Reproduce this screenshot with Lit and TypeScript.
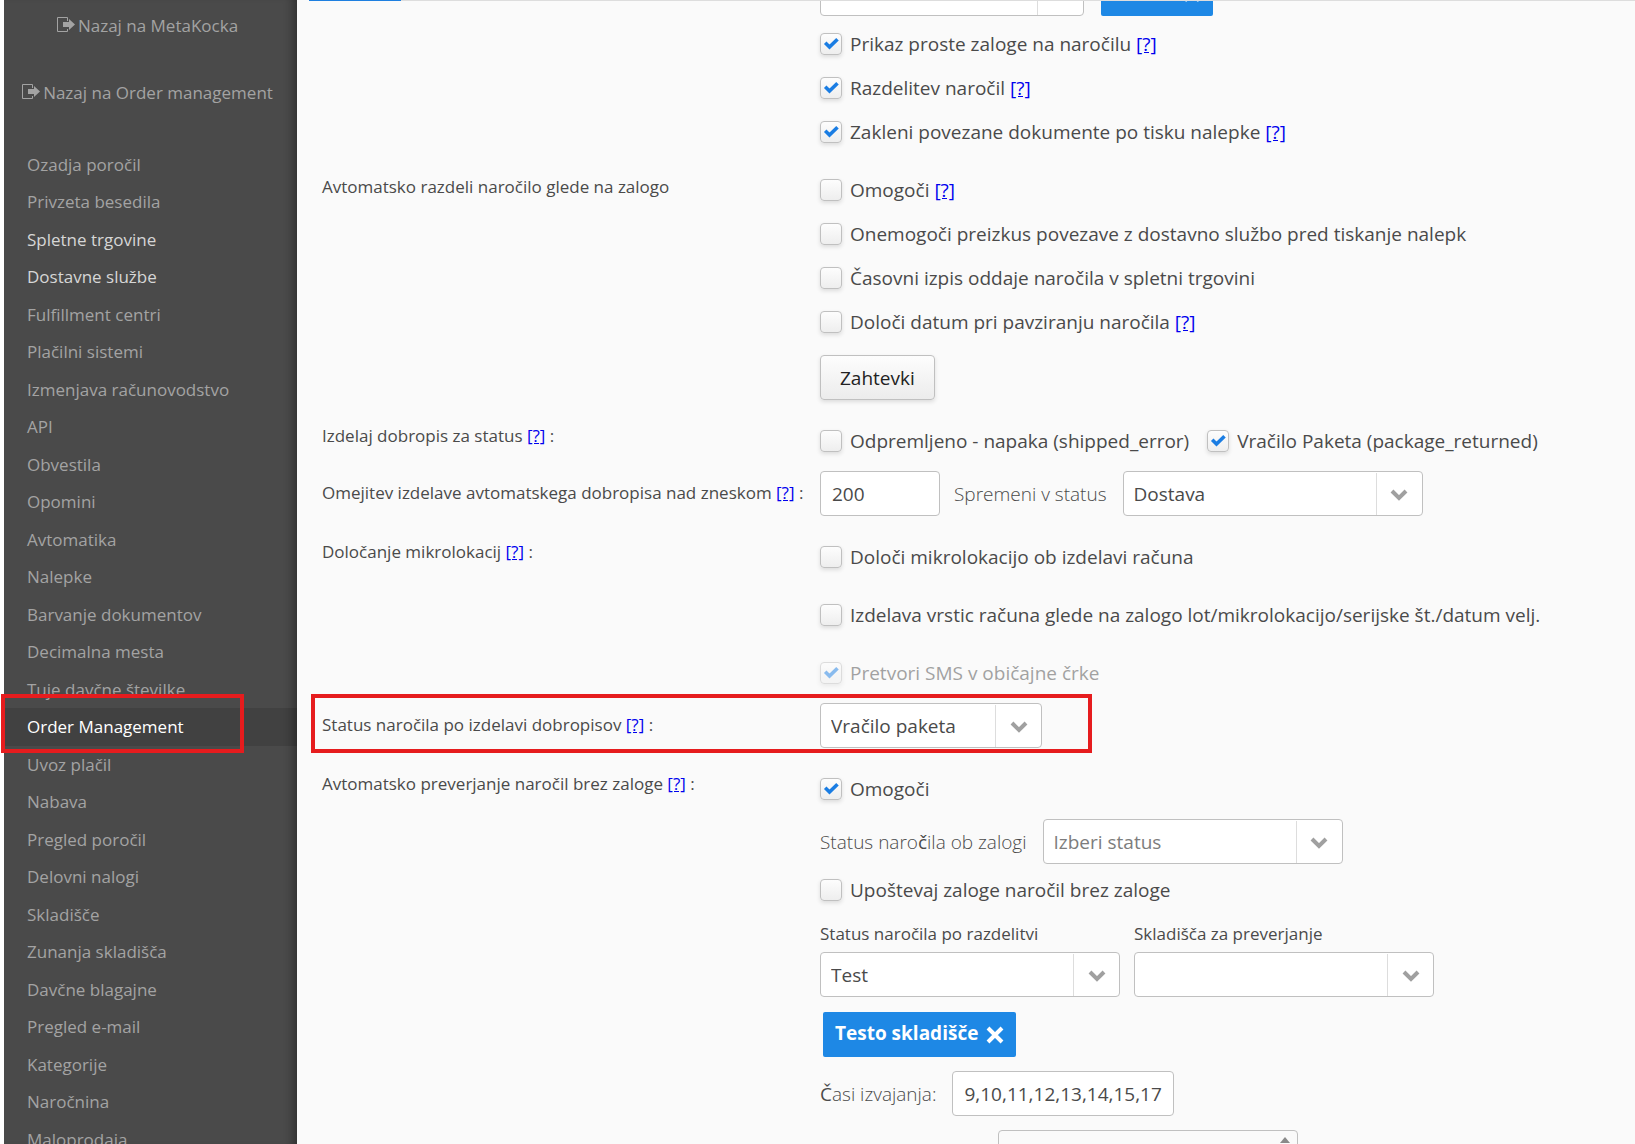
import { LitElement, html, css, svg, nothing, TemplateResult } from "lit";
import { customElement } from "lit/decorators.js";
import { classMap } from "lit/directives/class-map.js";

type NavItem = { text: string; strong?: boolean; current?: boolean };

const NAV: NavItem[] = [
  { text: "Ozadja poročil" },
  { text: "Privzeta besedila" },
  { text: "Spletne trgovine", strong: true },
  { text: "Dostavne službe", strong: true },
  { text: "Fulfillment centri" },
  { text: "Plačilni sistemi" },
  { text: "Izmenjava računovodstvo" },
  { text: "API" },
  { text: "Obvestila" },
  { text: "Opomini" },
  { text: "Avtomatika" },
  { text: "Nalepke" },
  { text: "Barvanje dokumentov" },
  { text: "Decimalna mesta" },
  { text: "Tuje davčne številke" },
  { text: "Order Management", current: true },
  { text: "Uvoz plačil" },
  { text: "Nabava" },
  { text: "Pregled poročil" },
  { text: "Delovni nalogi" },
  { text: "Skladišče" },
  { text: "Zunanja skladišča" },
  { text: "Davčne blagajne" },
  { text: "Pregled e-mail" },
  { text: "Kategorije" },
  { text: "Naročnina" },
  { text: "Maloprodaja" },
];

const exitIcon = svg`<svg class="exit" viewBox="0 0 18 16" width="18" height="16" aria-hidden="true">
  <path d="M10.5 4V.5H.5v14h10V12" fill="none" stroke="currentColor"/>
  <path d="M6 5h6V2l6 5.500-6 5.500V10H6z" fill="currentColor"/>
</svg>`;

@customElement("settings-nav")
export class SettingsNav extends LitElement {
  static styles = css`
    :host {
      display: block;
      box-sizing: border-box;
      width: 293px;
      flex: none;
      background: #4a4a4a;
      box-shadow: inset -11px 0 10px -7px rgba(0, 0, 0, 0.35);
      color: #a3a3a3;
      font-size: 17px;
    }
    a { color: inherit; text-decoration: none; }
    .back {
      display: flex;
      justify-content: center;
      align-items: center;
      gap: 3px;
      height: 67px;
      padding-right: 6px;
      white-space: nowrap;
    }
    .back:first-child { margin-top: -8px; }
    .exit { margin-bottom: 1px; }
    .list { list-style: none; margin: 20px 0 0; padding: 0; }
    .item { position: relative; line-height: 37px; }
    .item:nth-child(even) { line-height: 38px; }
    .link { display: block; padding-left: 23px; }
    .strong { color: #d6d6d6; }
    .current { color: #fff; background: rgba(0, 0, 0, 0.12); }
    .mark {
      position: absolute;
      box-sizing: border-box;
      top: -14px;
      left: -3px;
      width: 243px;
      height: 59px;
      border: 4px solid #e61c1e;
      pointer-events: none;
      z-index: 1;
    }
  `;

  render() {
    return html`
      <a class="back" href="#metakocka">${exitIcon}<span>Nazaj na MetaKocka</span></a>
      <a class="back" href="#orders">${exitIcon}<span>Nazaj na Order management</span></a>
      <ul class="list">
        ${NAV.map(
          (n) => html`<li class="item">
            <a class=${classMap({ link: true, strong: !!n.strong, current: !!n.current })} href="#"
              >${n.text}</a
            >${n.current ? html`<span class="mark"></span>` : nothing}
          </li>`
        )}
      </ul>
    `;
  }
}

const help = html`<a class="help" href="#help">[?]</a>`;

@customElement("app-root")
export class AppRoot extends LitElement {
  static styles = css`
    :host {
      display: flex;
      height: 100vh;
      overflow: hidden;
      padding-left: 4px;
      background: #fff;
      color: #4a4a4a;
      font-family: "Open Sans", "Noto Sans", sans-serif;
      font-size: 19px;
    }
    .main { flex: 1; min-width: 0; background: #fafafa; overflow: hidden; }
    .tabs { display: flex; height: 1px; margin-left: 12px; background: #ddd; }
    .tab { width: 92px; background: #1e7fe0; }
    .clip { overflow: hidden; }
    .form { margin: -30px 0 0; padding-left: 25px; }
    .row {
      position: relative;
      display: grid;
      grid-template-columns: 498px minmax(0, 1fr);
      margin-bottom: 19px;
    }
    .row.tight { margin-bottom: 8px; }
    .row.near { margin-bottom: 14px; }
    .label { font-size: 17px; line-height: 34px; white-space: nowrap; }
    .group .label { line-height: 38px; }
    .field .label { line-height: 44px; }
    .line { display: flex; align-items: center; gap: 14px; white-space: nowrap; }
    .line.loose { gap: 18px; }
    .gap4 { margin-top: 4px; }
    .gap6 { margin-top: 6px; }
    .gap8 { margin-top: 8px; }
    .gap10 { margin-top: 10px; }
    .gap14 { margin-top: 14px; }
    .help { color: #00e; text-decoration: underline; }
    .light { font-weight: 300; margin-right: 2px; }
    .regular { font-weight: 400; }

    .check { display: flex; align-items: center; gap: 8px; height: 44px; white-space: nowrap; }
    .check.off { opacity: 0.5; }
    .boxwrap { display: grid; }
    .boxwrap > * { grid-area: 1 / 1; }
    .box {
      appearance: none;
      box-sizing: border-box;
      width: 22px;
      height: 22px;
      margin: 0;
      border: 1px solid #c0c0c0;
      border-radius: 4px;
      background: linear-gradient(#fdfdfd, #eee);
      box-shadow: 0 2px 4px rgba(0, 0, 0, 0.12);
    }
    .tick { width: 22px; height: 22px; pointer-events: none; visibility: hidden; }
    .box:checked + .tick { visibility: visible; }

    .input, .select {
      box-sizing: border-box;
      height: 45px;
      border: 1px solid #c0c0c0;
      border-radius: 4px;
      background: #fff;
      color: #4a4a4a;
      font: inherit;
      padding: 0 11px;
      margin: 0;
    }
    .input { width: 120px; }
    .input.wide { width: 222px; }
    .pick { display: grid; grid-template-columns: 1fr 47px; width: 300px; }
    .pick.small { width: 222px; }
    .pick.mid { width: 264px; }
    .select { appearance: none; grid-area: 1 / 1 / 2 / 3; width: 100%; padding: 0 50px 0 10px; }
    .select.empty { color: #7d7d7d; }
    .arrow {
      grid-area: 1 / 2;
      display: grid;
      place-items: center;
      margin: 2px 1px 1px 0;
      border-left: 1px solid #ddd;
      pointer-events: none;
    }

    .btn {
      display: block;
      height: 45px;
      padding: 0 19px;
      border: 1px solid #c0c0c0;
      border-radius: 4px;
      background: linear-gradient(#fdfdfd, #ececec);
      box-shadow: 0 2px 4px rgba(0, 0, 0, 0.12);
      color: #222;
      font: inherit;
    }
    .request { margin-top: 11px; }
    .primary {
      display: flex;
      align-items: flex-end;
      justify-content: flex-end;
      width: 112px;
      padding: 0 14px 14px 0;
      margin-left: 3px;
      border: 0;
      border-radius: 2px;
      background: #1e88e5;
      box-shadow: none;
    }
    .pair { display: flex; gap: 14px; }
    .stack { display: grid; gap: 6px; font-size: 17px; line-height: 24px; }
    .stack .pick { font-size: 19px; }
    .tag {
      display: flex;
      width: max-content;
      align-items: center;
      gap: 8px;
      height: 45px;
      margin: 15px 0 0 3px;
      padding: 0 12px 4px;
      border: 0;
      border-radius: 2px;
      background: #1e88e5;
      color: #fff;
      font: inherit;
      font-weight: 700;
    }
    .cross { margin-top: 5px; }
    .multi {
      display: flex;
      justify-content: flex-end;
      box-sizing: border-box;
      width: 300px;
      height: 90px;
      margin-left: 178px;
      padding: 6px 7px;
      border: 1px solid #c0c0c0;
      border-radius: 4px;
    }
    .mark {
      position: absolute;
      box-sizing: border-box;
      top: -9px;
      left: -11px;
      width: 781px;
      height: 59px;
      border: 4px solid #e61c1e;
      pointer-events: none;
    }
  `;

  private check(text: string, opts: { on?: boolean; help?: boolean; off?: boolean } = {}): TemplateResult {
    return html`<label class=${classMap({ check: true, off: !!opts.off })}>
      <span class="boxwrap">
        <input class="box" type="checkbox" .checked=${!!opts.on} ?disabled=${!!opts.off} />
        <svg class="tick" viewBox="0 0 22 22" aria-hidden="true">
          <path d="M5.200 9.800l4.300 4.200 8-7.700" fill="none" stroke="#1a7de3" stroke-width="3.600" />
        </svg>
      </span>
      <span>${text}${opts.help ? html` ${help}` : nothing}</span>
    </label>`;
  }

  private pick(
    id: string,
    value: string,
    opts: { small?: boolean; mid?: boolean; empty?: boolean; label?: string } = {}
  ): TemplateResult {
    return html`<span class=${classMap({ pick: true, small: !!opts.small, mid: !!opts.mid })}>
      <select
        id=${id}
        class=${classMap({ select: true, empty: !!opts.empty })}
        aria-label=${opts.label ?? nothing}
      >
        <option>${value}</option>
      </select>
      <span class="arrow">
        <svg width="18" height="13" viewBox="0 0 18 13" aria-hidden="true">
          <path d="M2 3l7 7 7-7" fill="none" stroke="#a0a0a0" stroke-width="4" />
        </svg>
      </span>
    </span>`;
  }

  render() {
    return html`
      <settings-nav></settings-nav>
      <main class="main">
        <div class="tabs"><span class="tab"></span></div>
        <div class="clip">
          <form class="form">
            <div class="row near">
              <span class="label"></span>
              <div>
                <div class="line">
                  ${this.pick("source", "", { mid: true, label: "Status" })}
                  <button class="btn primary" type="button">
                    <svg width="14" height="2" viewBox="0 0 14 2" aria-hidden="true">
                      <path d="M0 0h2.500l-.5 1.500H.5zM11.500 0H14l-.5 1.500H12z" fill="#fff" />
                    </svg>
                  </button>
                </div>
                <div class="gap6">
                  ${this.check("Prikaz proste zaloge na naročilu", { on: true, help: true })}
                  ${this.check("Razdelitev naročil", { on: true, help: true })}
                  ${this.check("Zakleni povezane dokumente po tisku nalepke", { on: true, help: true })}
                </div>
              </div>
            </div>

            <div class="row group">
              <span class="label">Avtomatsko razdeli naročilo glede na zalogo</span>
              <div>
                ${this.check("Omogoči", { help: true })}
                ${this.check("Onemogoči preizkus povezave z dostavno službo pred tiskanje nalepk")}
                ${this.check("Časovni izpis oddaje naročila v spletni trgovini")}
                ${this.check("Določi datum pri pavziranju naročila", { help: true })}
                <button class="btn request" type="button">Zahtevki</button>
              </div>
            </div>

            <div class="row tight">
              <span class="label">Izdelaj dobropis za status ${help} :</span>
              <div class="line loose">
                ${this.check("Odpremljeno - napaka (shipped_error)")}
                ${this.check("Vračilo Paketa (package_returned)", { on: true })}
              </div>
            </div>

            <div class="row field">
              <label class="label" for="limit">Omejitev izdelave avtomatskega dobropisa nad zneskom ${help} :</label>
              <div class="line">
                <input id="limit" class="input" type="text" .value=${"200"} />
                <label class="light" for="change">Spremeni v status</label>
                ${this.pick("change", "Dostava")}
              </div>
            </div>

            <div class="row tight">
              <span class="label">Določanje mikrolokacij ${help} :</span>
              <div>
                ${this.check("Določi mikrolokacijo ob izdelavi računa")}
                <div class="gap14">
                  ${this.check("Izdelava vrstic računa glede na zalogo lot/mikrolokacijo/serijske št./datum velj.")}
                </div>
                <div class="gap14">${this.check("Pretvori SMS v običajne črke", { on: true, off: true })}</div>
              </div>
            </div>

            <div class="row field">
              <label class="label" for="after">Status naročila po izdelavi dobropisov ${help} :</label>
              ${this.pick("after", "Vračilo paketa", { small: true })}
              <span class="mark"></span>
            </div>

            <div class="row">
              <span class="label">Avtomatsko preverjanje naročil brez zaloge ${help} :</span>
              <div>
                ${this.check("Omogoči", { on: true })}
                <div class="line gap8">
                  <label class="light" for="stock">Status naro<span class="regular">č</span>ila ob zalogi</label>
                  ${this.pick("stock", "Izberi status", { empty: true })}
                </div>
                <div class="gap4">${this.check("Upoštevaj zaloge naročil brez zaloge")}</div>
                <div class="pair gap10">
                  <div class="stack">
                    <label for="split">Status naročila po razdelitvi</label>
                    ${this.pick("split", "Test")}
                  </div>
                  <div class="stack">
                    <label for="stores">Skladišča za preverjanje</label>
                    ${this.pick("stores", "")}
                  </div>
                </div>
                <button class="tag" type="button">
                  Testo skladišče
                  <svg class="cross" width="18" height="18" viewBox="0 0 18 18" aria-hidden="true">
                    <path d="M2 2l14 14M16 2L2 16" stroke="#fff" stroke-width="4" />
                  </svg>
                </button>
                <div class="line gap14">
                  <label class="light" for="times"><span class="regular">Č</span>asi izvajanja:</label>
                  <input id="times" class="input wide" type="text" .value=${"9,10,11,12,13,14,15,17"} />
                </div>
                <div class="multi gap14">
                  <svg width="10" height="6" viewBox="0 0 10 6" aria-hidden="true">
                    <path d="M0 6l5-6 5 6z" fill="#8a8a8a" />
                  </svg>
                </div>
              </div>
            </div>
          </form>
        </div>
      </main>
    `;
  }
}
